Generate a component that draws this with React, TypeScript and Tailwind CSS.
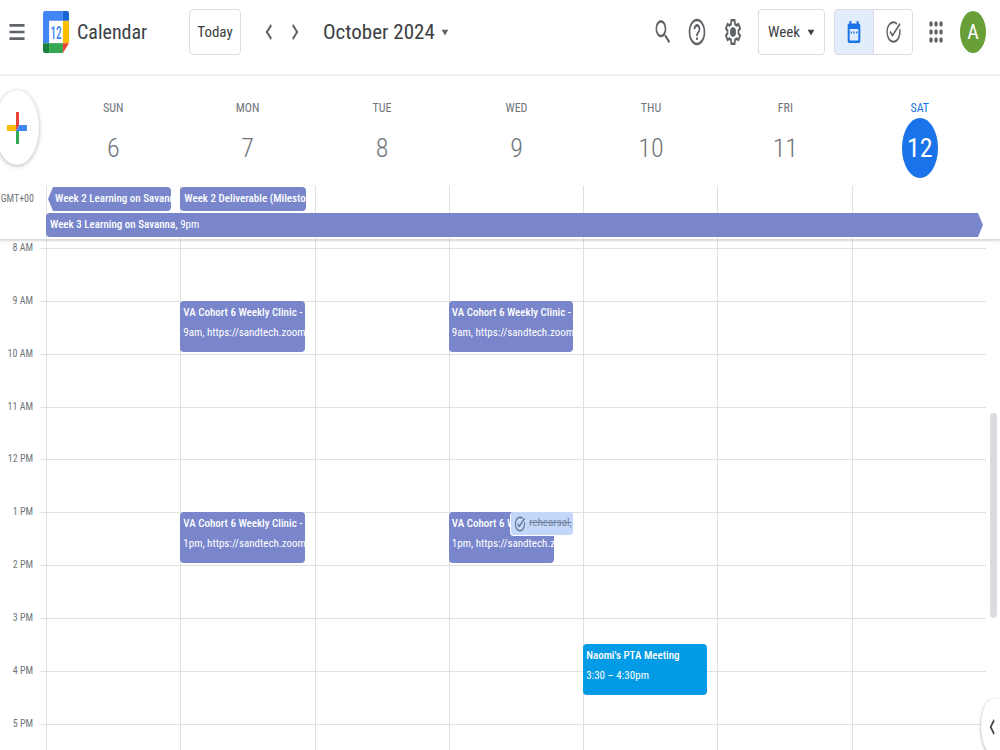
import type { ReactNode } from "react";

const DAYS = [
  { name: "SUN", date: 6 },
  { name: "MON", date: 7 },
  { name: "TUE", date: 8 },
  { name: "WED", date: 9 },
  { name: "THU", date: 10 },
  { name: "FRI", date: 11 },
  { name: "SAT", date: 12, today: true },
];

const HOURS = ["8 AM", "9 AM", "10 AM", "11 AM", "12 PM", "1 PM", "2 PM", "3 PM", "4 PM", "5 PM"];

type CalendarEvent = {
  day: number;
  start: number;
  title: string;
  detail: string;
  tone: string;
};

const PURPLE = "bg-[#7986cb] mr-[10px]";

const EVENTS: CalendarEvent[] = [
  { day: 1, start: 9, title: "VA Cohort 6 Weekly Clinic - Monday", detail: "9am, https://sandtech.zoom.us", tone: PURPLE },
  { day: 3, start: 9, title: "VA Cohort 6 Weekly Clinic - Wednesday", detail: "9am, https://sandtech.zoom.us", tone: PURPLE },
  { day: 1, start: 13, title: "VA Cohort 6 Weekly Clinic - Monday", detail: "1pm, https://sandtech.zoom.us", tone: PURPLE },
  { day: 3, start: 13, title: "VA Cohort 6 Weekly Clinic", detail: "1pm, https://sandtech.zoom.us", tone: "bg-[#7986cb] mr-[29px]" },
  { day: 4, start: 15.5, title: "Naomi's PTA Meeting", detail: "3:30 – 4:30pm", tone: "bg-[#039be5] mr-[10px]" },
];

const TASK_PATH =
  "M22 5.18L10.59 16.6l-4.24-4.24 1.41-1.41 2.83 2.83 10-10L22 5.18zm-2.21 5.04c.13.57.21 1.17.21 1.78 0 4.42-3.58 8-8 8s-8-3.58-8-8 3.58-8 8-8c1.58 0 3.04.46 4.28 1.25l1.44-1.44A9.9 9.9 0 0 0 12 2C6.48 2 2 6.48 2 12s4.48 10 10 10 10-4.48 10-10c0-1.19-.22-2.33-.6-3.39l-1.61 1.61z";

function Icon({ children, className = "h-8 w-5" }: { children: ReactNode; className?: string }) {
  return (
    <svg viewBox="0 0 24 24" preserveAspectRatio="none" fill="currentColor" className={className} aria-hidden="true">
      {children}
    </svg>
  );
}

function Logo() {
  return (
    <svg viewBox="0 0 200 200" preserveAspectRatio="none" className="h-[42px] w-[26px] shrink-0" aria-hidden="true">
      <path fill="#fff" d="M47 47h106v106H47z" />
      <path fill="#4285f4" d="M16 0h137v47H47v106H0V16A16 16 0 0 1 16 0z" />
      <path fill="#1967d2" d="M153 0h31a16 16 0 0 1 16 16v31h-47z" />
      <path fill="#fbbc04" d="M153 47h47v106h-47z" />
      <path fill="#34a853" d="M47 153h106v47H47z" />
      <path fill="#188038" d="M0 153h47v47H16a16 16 0 0 1-16-16z" />
      <path fill="#ea4335" d="M153 153h47l-47 47z" />
      <text x="100" y="131" textAnchor="middle" fontSize="86" fontWeight="500" fill="#4285f4">
        12
      </text>
    </svg>
  );
}

function Header() {
  return (
    <header className="flex h-[76px] items-center border-b-2 border-[#eeeeee] pb-[10px] pl-[7px] pr-[14px] text-[#5f6368]">
      <button aria-label="Main menu" className="mr-4">
        <Icon>
          <path d="M3 18h18v-2H3v2zm0-5h18v-2H3v2zm0-7v2h18V6H3z" />
        </Icon>
      </button>
      <a href="#home" className="flex w-[146px] items-center gap-2 text-[#3c4043]">
        <Logo />
        <span className="text-xl leading-8">Calendar</span>
      </a>
      <button className="h-[46px] w-[52px] rounded border border-[#dadce0] text-[15px] text-[#3c4043]">
        Today
      </button>
      <div className="ml-[15px] flex">
        <button aria-label="Previous week" className="w-[26px]">
          <Icon className="mx-auto h-8 w-5">
            <path d="M15.41 7.41 14 6l-6 6 6 6 1.41-1.41L10.83 12z" />
          </Icon>
        </button>
        <button aria-label="Next week" className="w-[26px]">
          <Icon className="mx-auto h-8 w-5">
            <path d="M10 6 8.59 7.41 13.17 12l-4.58 4.59L10 18l6-6z" />
          </Icon>
        </button>
      </div>
      <button className="ml-[15px] flex items-center text-[21px] leading-8 text-[#3c4043]">
        October 2024
        <Icon className="ml-[2px] h-7 w-4 text-[#5f6368]">
          <path d="M7 10l5 5 5-5z" />
        </Icon>
      </button>

      <div className="ml-auto flex items-center">
        <button aria-label="Search" className="mr-[14px]">
          <Icon>
            <path d="M15.5 14h-.79l-.28-.27A6.47 6.47 0 0 0 16 9.5 6.5 6.5 0 1 0 9.5 16c1.61 0 3.09-.59 4.23-1.57l.27.28v.79l5 4.99L20.49 19l-4.99-5zm-6 0C7.01 14 5 11.99 5 9.5S7.01 5 9.5 5 14 7.01 14 9.5 11.99 14 9.5 14z" />
          </Icon>
        </button>
        <button aria-label="Help" className="mr-4">
          <Icon>
            <path d="M11 18h2v-2h-2v2zm1-16C6.48 2 2 6.48 2 12s4.48 10 10 10 10-4.48 10-10S17.52 2 12 2zm0 18c-4.41 0-8-3.59-8-8s3.59-8 8-8 8 3.59 8 8-3.59 8-8 8zm0-14c-2.21 0-4 1.79-4 4h2c0-1.1.9-2 2-2s2 .9 2 2c0 2-3 1.75-3 5h2c0-2.25 3-2.5 3-5 0-2.21-1.79-4-4-4z" />
          </Icon>
        </button>
        <button aria-label="Settings" className="mr-[15px]">
          <Icon>
            <path
              fill="none"
              stroke="currentColor"
              strokeWidth="2"
              d="M18.5 13c.1-.6.1-1.400 0-2l2-1.600-1.900-3.300-2.400 1c-.6-.5-1.200-.8-1.800-1.100L14 3.200h-4L9.600 6c-.6.3-1.200.6-1.800 1.100l-2.400-1L3.500 9.400l2 1.600c-.1.6-.1 1.400 0 2l-2 1.600 1.900 3.300 2.400-1c.6.5 1.200.8 1.800 1.100l.4 2.800h4l.4-2.800c.6-.3 1.200-.6 1.800-1.100l2.400 1 1.900-3.300z"
            />
            <circle cx="12" cy="12" r="3.600" />
          </Icon>
        </button>
        <div className="relative mr-[9px] flex items-center text-[#3c4043]">
          <select
            aria-label="View"
            className="h-[46px] w-[67px] appearance-none rounded border border-[#dadce0] bg-white pl-[9px] text-[15px]"
          >
            <option>Week</option>
          </select>
          <Icon className="pointer-events-none absolute right-[6px] h-7 w-4">
            <path d="M7 10l5 5 5-5z" />
          </Icon>
        </div>
        <div className="mr-[13px] flex h-[46px] w-[79px] overflow-hidden rounded border border-[#dadce0]">
          <button aria-label="Calendar view" className="flex flex-1 items-center justify-center bg-[#e1edfb] text-[#1a73e8]">
            <Icon className="h-6 w-4">
              <path
                fillRule="evenodd"
                d="M5 1h3v2.500h8V1h3v2.500c1.600 0 2.500.9 2.500 2V21c0 1.100-.9 2-2.500 2H5c-1.600 0-2.500-.9-2.500-2V5.500c0-1.100.9-2 2.500-2zM5.500 9v11.500h13V9zm1.500 2.500h2v2H7zm4 0h2v2h-2zm4 0h2v2h-2z"
              />
            </Icon>
          </button>
          <button aria-label="Tasks view" className="flex flex-1 items-center justify-center border-l border-[#dadce0]">
            <Icon className="h-[26px] w-[17px]">
              <path d={TASK_PATH} />
            </Icon>
          </button>
        </div>
        <button aria-label="Google apps" className="mr-[14px]">
          <Icon>
            {[6, 12, 18].map((y) => [6, 12, 18].map((x) => <circle key={`${x}-${y}`} cx={x} cy={y} r="2.100" />))}
          </Icon>
        </button>
        <button aria-label="Account" className="h-[42px] w-[26px] rounded-[50%] bg-[#689f38] text-xl text-white">
          A
        </button>
      </div>
    </header>
  );
}

function DayHeader() {
  return (
    <div className="relative grid h-[110px] grid-cols-[46px_repeat(7,minmax(0,1fr))] pr-[13px] pt-6">
      <button
        aria-label="Create"
        className="absolute -left-[5px] top-[14px] flex h-[75px] w-11 items-center justify-center rounded-[50%] bg-white shadow-[0_1px_4px_rgba(60,64,67,0.4)]"
      >
        <svg viewBox="0 0 20 32" className="h-8 w-5" aria-hidden="true">
          <path fill="#ea4335" d="M9 0h3v13l-3 6z" />
          <path fill="#fbbc04" d="M0 13h9v6H0z" />
          <path fill="#34a853" d="M9 19l3-4v17H9z" />
          <path fill="#4285f4" d="M12 13h8v6H9z" />
        </svg>
      </button>
      <span />
      {DAYS.map((day) => (
        <div key={day.name} className={`flex flex-col items-center ${day.today ? "text-[#1a73e8]" : "text-[#70757a]"}`}>
          <span className="text-xs leading-4">{day.name}</span>
          <span
            className={`mt-[2px] flex h-[60px] w-9 items-center justify-center rounded-[50%] text-[26px] ${
              day.today ? "bg-[#1a73e8] text-white" : "font-light"
            }`}
          >
            {day.date}
          </span>
        </div>
      ))}
    </div>
  );
}

function AllDay() {
  return (
    <div className="relative z-10 grid grid-cols-[46px_repeat(7,minmax(0,1fr))] grid-rows-[24px_24px] gap-y-[2px] border-b border-[#dadce0] pb-[2px] pr-[14px] pt-[1px] text-[11px] leading-6 text-white shadow-[0_1px_2px_rgba(60,64,67,0.2)]">
      <span className="col-start-1 row-start-1 pr-[12px] text-right text-[10px] leading-6 text-[#70757a]">GMT+00</span>
      {DAYS.map((day, i) => (
        <div
          key={day.name}
          className="-mb-[2px] -mt-[1px] border-l border-[#e0e0e0]"
          style={{ gridColumn: i + 2, gridRow: "1 / 3" }}
        />
      ))}
      <div className="col-start-2 row-start-1 ml-[2px] mr-[9px] overflow-hidden rounded bg-[#7986cb] pl-[7px] font-medium [clip-path:polygon(5px_0,100%_0,100%_100%,5px_100%,0_50%)]">
        <p className="overflow-hidden whitespace-nowrap">Week 2 Learning on Savanna</p>
      </div>
      <div className="col-start-3 row-start-1 mr-[9px] overflow-hidden rounded bg-[#7986cb] pl-1 font-medium">
        <p className="overflow-hidden whitespace-nowrap">Week 2 Deliverable (Milestone)</p>
      </div>
      <div className="col-span-7 col-start-2 row-start-2 mr-[3px] rounded-l bg-[#7986cb] pl-1 [clip-path:polygon(0_0,calc(100%-5px)_0,100%_50%,calc(100%-5px)_100%,0_100%)]">
        <span className="font-medium">Week 3 Learning on Savanna,</span> 9pm
      </div>
    </div>
  );
}

function TimeGrid() {
  return (
    <main className="relative grid flex-1 overflow-hidden pr-[14px]">
      <div className="grid grid-cols-[40px_6px_repeat(7,minmax(0,1fr))] grid-rows-[8px_repeat(19,minmax(26px,1fr))]">
        {HOURS.map((label, i) => (
          <span
            key={label}
            className="-mt-2 self-start pr-[7px] text-right text-[10px] leading-4 text-[#70757a]"
            style={{ gridColumn: 1, gridRow: i * 2 + 2 }}
          >
            {label}
          </span>
        ))}
        {HOURS.map((label, i) => (
          <div
            key={label}
            className="border-t border-[#e0e0e0]"
            style={{ gridColumn: "2 / -1", gridRow: i * 2 + 2 }}
          />
        ))}
        {DAYS.map((day, i) => (
          <div
            key={day.name}
            className="border-l border-[#e0e0e0]"
            style={{ gridColumn: i + 3, gridRow: "1 / -1" }}
          />
        ))}
        {EVENTS.map((event) => (
          <article
            key={`${event.day}-${event.start}`}
            className={`mb-[2px] overflow-hidden whitespace-nowrap rounded pl-[3px] pt-[2px] text-[11px] leading-5 text-white ${event.tone}`}
            style={{ gridColumn: event.day + 3, gridRow: `${(event.start - 8) * 2 + 2} / span 2` }}
          >
            <h3 className="font-medium">{event.title}</h3>
            <p>{event.detail}</p>
          </article>
        ))}
        <div
          className="mr-[10px] flex h-6 w-[63px] items-center gap-[3px] justify-self-end overflow-hidden whitespace-nowrap rounded border-b border-l border-white bg-[#c2d7f9] pl-[3px] text-[11px] text-[#70819c]"
          style={{ gridColumn: 6, gridRow: 12 }}
        >
          <Icon className="h-[18px] w-3 shrink-0 text-[#5f6f8a]">
            <path d={TASK_PATH} />
          </Icon>
          <s>rehearsal,</s>
        </div>
      </div>
      <div className="absolute right-[3px] top-[34%] h-[205px] w-[7px] rounded-full bg-[#dadce0]" />
      <button
        aria-label="Show side panel"
        className="absolute -bottom-1 -right-[5px] flex h-[55px] w-6 items-center rounded-l-[50%] bg-white pl-[6px] text-[#3c4043] shadow-[0_1px_3px_rgba(60,64,67,0.5)]"
      >
        <Icon className="h-8 w-4">
          <path d="M11.41 7.41 10 6l-6 6 6 6 1.41-1.41L6.83 12z" />
        </Icon>
      </button>
    </main>
  );
}

export default function App() {
  return (
    <div className="flex h-screen min-h-[740px] flex-col overflow-hidden bg-white font-['Roboto_Condensed','Liberation_Sans_Narrow',Roboto,sans-serif]">
      <Header />
      <DayHeader />
      <AllDay />
      <TimeGrid />
    </div>
  );
}
